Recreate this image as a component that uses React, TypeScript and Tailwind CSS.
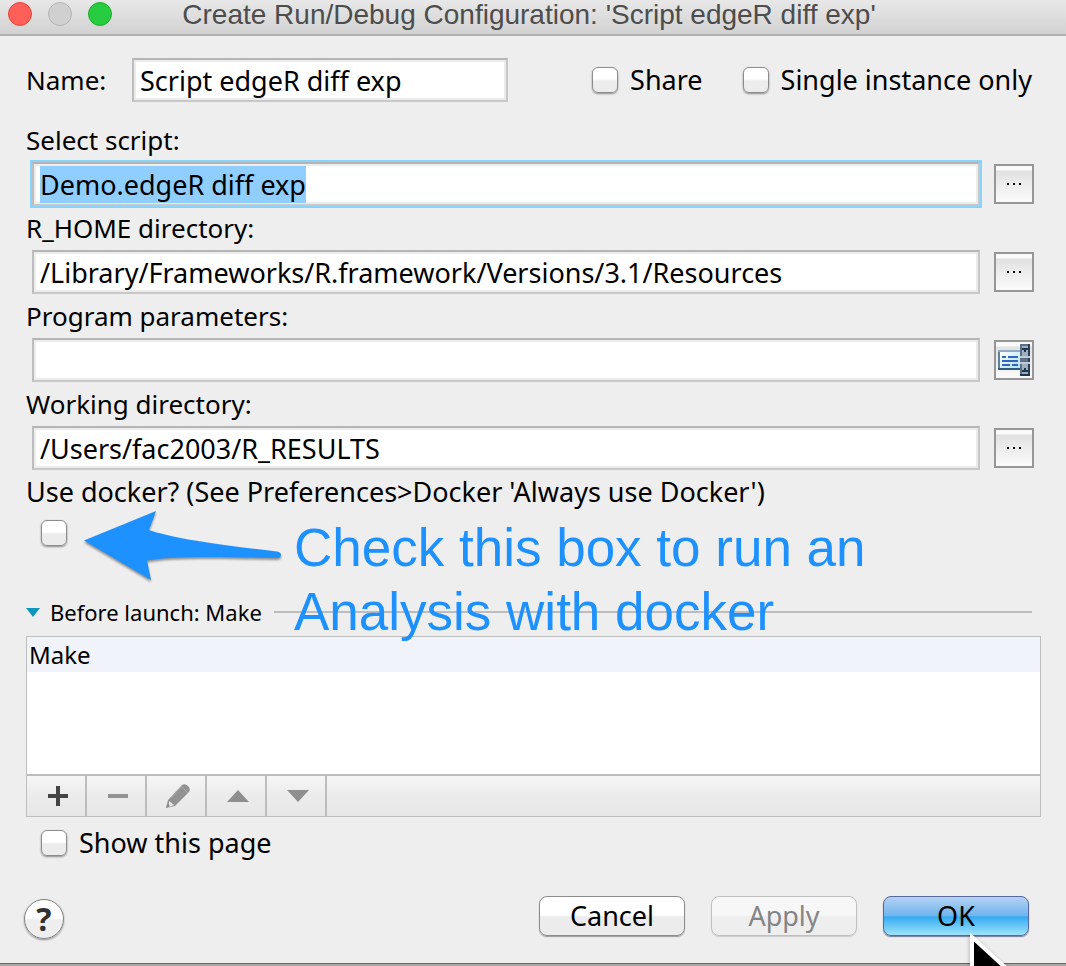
import { useEffect, useRef } from "react";
import type { ReactNode } from "react";

const fieldClass =
  "h-11 min-w-0 border-2 border-[#c8c8c8] border-t-[#b4b4b4] border-l-[#bdbdbd] bg-white px-1.5 text-[27px] leading-8 text-black shadow-[inset_0_0_0_2px_#ececec] outline-none selection:bg-[#8fceff] selection:text-black";

function CheckBox({ id }: { id: string }) {
  return (
    <input
      id={id}
      type="checkbox"
      className="size-[26px] shrink-0 appearance-none rounded-md border border-[#8c8c8c] bg-linear-to-b from-white from-45% to-[#ececec] to-55% shadow-[0_1px_2px_#8c8c8c]"
    />
  );
}

function MacroIcon() {
  return (
    <svg viewBox="0 0 32 32" className="size-8" shapeRendering="crispEdges" aria-hidden="true">
      <defs>
        <linearGradient id="card" x1="0" y1="0" x2="1" y2="1">
          <stop offset="0" stopColor="#ffffff" />
          <stop offset="1" stopColor="#aee2ff" />
        </linearGradient>
      </defs>
      <rect y="6" width="22" height="20" fill="#5e8196" />
      <rect y="6" width="22" height="2" fill="#8fa9c4" />
      <rect y="24" width="22" height="2" fill="#315a7c" />
      <rect x="2" y="8" width="20" height="16" fill="url(#card)" />
      <path d="M4 12h4v2H4zM10 12h10v2H10zM4 16h16v2H4zM4 20h8v2H4zM14 20h6v2h-6z" fill="#3266bd" />
      <rect x="22" width="10" height="32" fill="#5b7088" />
      <rect x="30" width="2" height="32" fill="#283f58" />
      <rect x="22" y="30" width="10" height="2" fill="#1e3850" />
      <path d="M24 2h6v10h-6zM24 20h6v10h-6z" fill="#a0adbd" />
      <path d="M22 12h10v2H22zM22 18h10v2H22z" fill="#c1c9d2" />
      <path d="M24 4h6v2h-2v2h-2V6h-2zM26 24h2v2h2v2h-6v-2h2z" fill="#1b3853" />
    </svg>
  );
}

function BrowseButton({ label, children }: { label: string; children?: ReactNode }) {
  return (
    <button
      type="button"
      aria-label={label}
      className="flex size-10 shrink-0 items-center justify-center border-2 border-[#969696] bg-linear-to-b from-[#fafafa] from-10% via-[#e2e2e2] via-15% to-[#fbfbfb]"
    >
      {children ?? (
        <svg viewBox="0 0 14 2" className="h-0.5 w-3.5" aria-hidden="true">
          <path d="M0 0h2v2H0zM6 0h2v2H6zM12 0h2v2h-2z" fill="#000" />
        </svg>
      )}
    </button>
  );
}

function PathField({
  id,
  label,
  value,
  active,
  icon,
}: {
  id: string;
  label: string;
  value: string;
  active?: boolean;
  icon?: ReactNode;
}) {
  const ref = useRef<HTMLInputElement>(null);
  useEffect(() => {
    if (active) {
      ref.current?.focus();
      ref.current?.select();
    }
  }, [active]);
  return (
    <div>
      <label htmlFor={id} className="flex h-11 items-center text-[26px]">
        {label}
      </label>
      <div className="flex items-center gap-3.5 pl-1.5">
        <input
          id={id}
          ref={ref}
          type="text"
          defaultValue={value}
          className={fieldClass + " flex-1 focus:ring-2 focus:ring-[#86d3fb]"}
        />
        <BrowseButton label={"Browse: " + label}>{icon}</BrowseButton>
      </div>
    </div>
  );
}

function ToolButton({ label, children }: { label: string; children: ReactNode }) {
  return (
    <button
      type="button"
      aria-label={label}
      className="flex w-[60px] items-center justify-center border-r-2 border-[#bdbdbd] pl-1"
    >
      <svg viewBox="0 0 32 32" className="size-8" aria-hidden="true">
        {children}
      </svg>
    </button>
  );
}

const pushClass = "h-10 w-[146px] rounded-lg border text-[27px] leading-8";

export default function App() {
  return (
    <div
      className="relative flex min-h-screen flex-col overflow-hidden bg-[#eeeeee] text-[27px] leading-8 text-black"
      style={{ fontFamily: '"Lucida Grande", "Noto Sans", sans-serif' }}
    >
      <header className="relative flex h-9 items-center border-b-2 border-[#b1b1b1] bg-linear-to-b from-[#e8e8e8] to-[#d2d2d2]">
        <div className="absolute left-2 top-0.5 flex gap-4">
          <button type="button" aria-label="Close" className="size-6 rounded-full border border-[#e2463f] bg-[#ff5f57]" />
          <button type="button" aria-label="Minimize" className="size-6 rounded-full border border-[#b4b4b4] bg-[#d0d0d0]" />
          <button type="button" aria-label="Zoom" className="size-6 rounded-full border border-[#1dad2b] bg-[#28cc40]" />
        </div>
        <h1 className="w-full pb-1 pr-2 text-center font-['Liberation_Sans',sans-serif] text-[28px] leading-8 text-[#4d4d4d]">
          Create Run/Debug Configuration: 'Script edgeR diff exp'
        </h1>
      </header>

      <main className="flex flex-1 flex-col pt-[22px]">
        <div className="flex h-11 items-center px-[26px]">
          <label htmlFor="name" className="w-[106px] shrink-0 text-[26px]">
            Name:
          </label>
          <input id="name" type="text" defaultValue="Script edgeR diff exp" className={fieldClass + " w-[376px]"} />
          <div className="ml-auto flex gap-10 pr-2">
            <div className="flex items-center gap-3">
              <CheckBox id="share" />
              <label htmlFor="share">Share</label>
            </div>
            <div className="flex items-center gap-3">
              <CheckBox id="single" />
              <label htmlFor="single" className="whitespace-nowrap">
                Single instance only
              </label>
            </div>
          </div>
        </div>

        <div className="mt-4 pl-[26px] pr-8">
          <PathField id="script" label="Select script:" value="Demo.edgeR diff exp" active />
          <PathField id="rhome" label="R_HOME directory:" value="/Library/Frameworks/R.framework/Versions/3.1/Resources" />
          <PathField id="params" label="Program parameters:" value="" icon={<MacroIcon />} />
          <PathField id="workdir" label="Working directory:" value="/Users/fac2003/R_RESULTS" />
        </div>

        <section className="relative px-[26px]">
          <label htmlFor="docker" className="flex h-11 items-center">
            Use docker? (See Preferences&gt;Docker 'Always use Docker')
          </label>
          <div className="flex h-20 items-start pl-[15px] pt-1.5">
            <CheckBox id="docker" />
          </div>
          <div className="flex h-[42px] items-center pb-[6px] pr-2 text-[22px]">
            <button type="button" className="flex items-center gap-2.5 whitespace-nowrap">
              <svg viewBox="0 0 14 9" className="h-[9px] w-3.5" aria-hidden="true">
                <path d="M0 0h14L7 9z" fill="#0f97bd" />
              </svg>
              Before launch: Make
            </button>
            <span className="ml-3 h-0.5 flex-1 bg-[#bcbcbc]" />
          </div>

          <div className="pointer-events-none absolute left-[84px] top-10 z-10 flex items-start text-[#1c91ff]">
            <svg viewBox="0 0 200 76" className="h-[76px] w-[200px] drop-shadow-[0_2px_1px_#00000066]" aria-hidden="true">
              <path
                d="M0 30.500L72 1L65 20C85 27 125 34 193 41.500Q197 42 197 45Q197 48 193 48C130 46.500 85 46 63 50.500L67 70Z"
                fill="currentColor"
              />
            </svg>
            <p className="ml-2.5 mt-1.5 whitespace-nowrap font-['Liberation_Sans',sans-serif] text-[53px] leading-[64px]">
              Check this box to run an
              <br />
              Analysis with docker
            </p>
          </div>
        </section>

        <section className="ml-[26px] mr-[25px] border border-[#bdbdbd] bg-white">
          <ul className="h-[137px]">
            <li className="h-[35px] bg-[#f0f4fa] px-0.5 text-[24px] leading-9">Make</li>
          </ul>
          <div className="flex h-[42px] border-t-2 border-[#bdbdbd] bg-linear-to-b from-[#f6f6f6] from-0% via-[#ececec] via-45% to-[#e7e7e7]">
            <ToolButton label="Add">
              <path d="M14 6h4v8h8v4h-8v8h-4v-8H6v-4h8z" fill="#444" />
            </ToolButton>
            <ToolButton label="Remove">
              <path d="M6 14h20v4H6z" fill="#929292" />
            </ToolButton>
            <ToolButton label="Edit">
              <path d="M4 28l2-8L20 5q3-2 6 1t1 6L13 26z" fill="#929292" />
              <path d="M7 21l5 4-5 2z" fill="#e7e7e7" />
              <path d="M4 28l2-4 2 2z" fill="#888" />
              <path d="M19 6l7 7M9 18l11-12" fill="none" stroke="#aaa" />
            </ToolButton>
            <ToolButton label="Move up">
              <path d="M5 22L16 10l11 12z" fill="#8e8e8e" />
            </ToolButton>
            <ToolButton label="Move down">
              <path d="M5 10h22L16 22z" fill="#8e8e8e" />
            </ToolButton>
          </div>
        </section>

        <div className="flex h-[52px] items-center gap-3 pl-[41px] pr-10">
          <CheckBox id="showpage" />
          <label htmlFor="showpage">Show this page</label>
        </div>

        <footer className="mt-auto flex items-center gap-[26px] pb-6 pl-6 pr-[37px]">
          <button
            type="button"
            aria-label="Help"
            className="mr-auto mt-1.5 size-10 rounded-full border border-[#828282] bg-linear-to-b from-white from-48% to-[#eeeeee] to-52% font-['Open_Sans',sans-serif] text-[32px] leading-8 font-bold text-[#303030] shadow-[0_1px_2px_#8c8c8c]"
          >
            ?
          </button>
          <button type="button" className={pushClass + " border-[#8c8c8c] bg-linear-to-b from-white from-48% to-[#ececec] to-52% shadow-[0_1px_1px_#999999]"}>
            Cancel
          </button>
          <button type="button" disabled className={pushClass + " border-[#c0c0c0] bg-linear-to-b from-[#f7f7f7] from-48% to-[#eeeeee] to-52% text-[#858585] shadow-[0_1px_1px_#cccccc]"}>
            Apply
          </button>
          <button type="button" className={pushClass + " border-[#59679b] bg-[linear-gradient(#b5d2f3,#6eb4ee_50%,#34a9f3_52%,#9ee4fa)] shadow-[0_1px_1px_#777799]"}>
            OK
          </button>
        </footer>
      </main>

      <div className="h-[3px] border-t border-[#666666] bg-[#aaa6a6]" />
      <svg
        viewBox="0 0 40 36"
        className="pointer-events-none absolute bottom-0 right-[58px] h-9 w-10 drop-shadow-[0_2px_2px_#00000055]"
        aria-hidden="true"
      >
        <path d="M4 7v48l50-2z" fill="#000" stroke="#fff" strokeWidth="4" />
      </svg>
    </div>
  );
}
